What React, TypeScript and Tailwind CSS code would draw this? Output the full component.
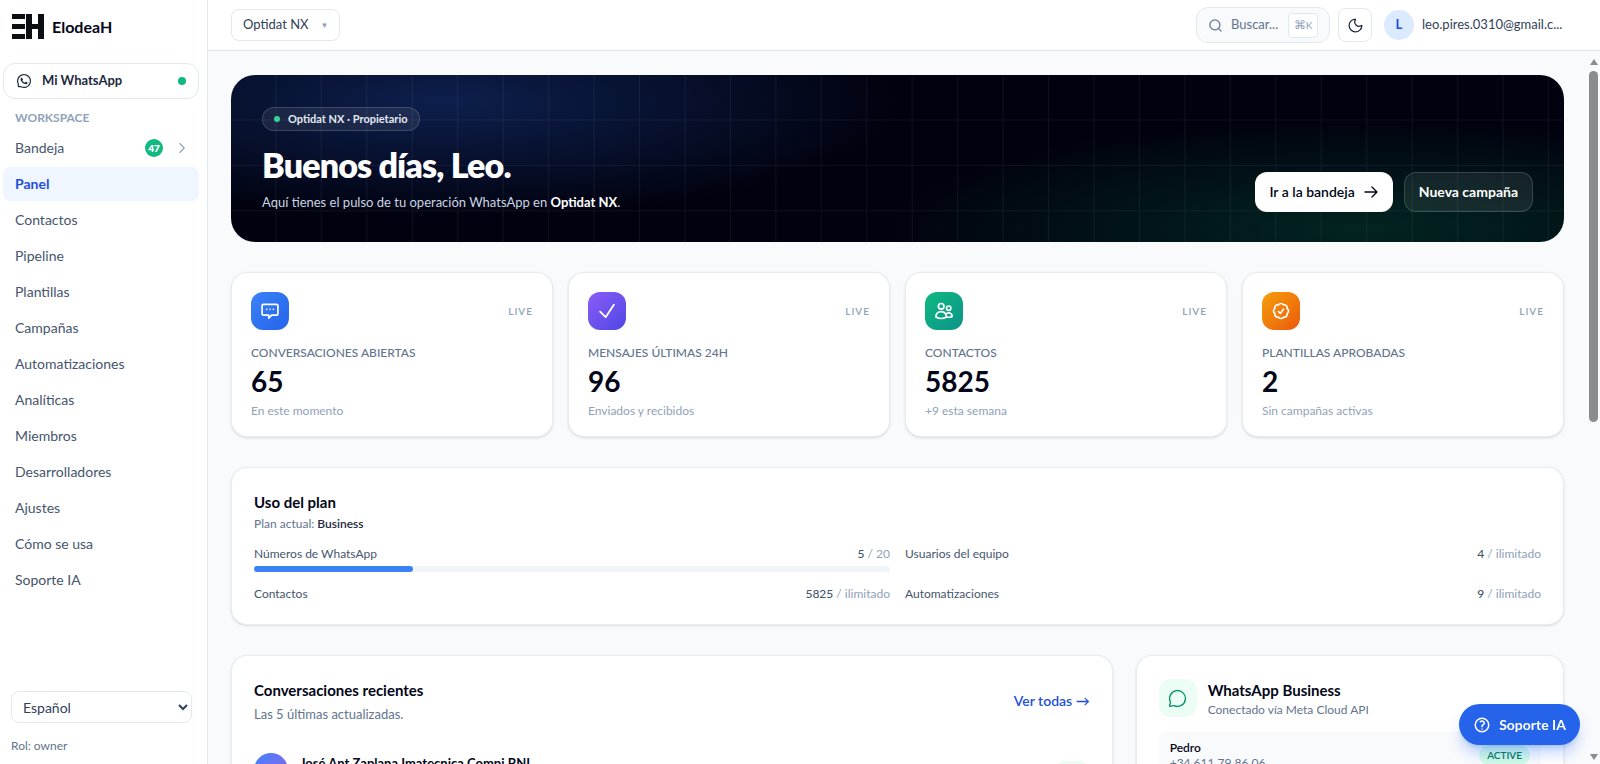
import { clsx } from "clsx";
import type { ReactNode } from "react";
import { AiOutlineWhatsApp } from "react-icons/ai";
import {
  HiOutlineArrowRight,
  HiOutlineCheck,
  HiOutlineCheckBadge,
  HiOutlineQuestionMarkCircle,
  HiOutlineUsers,
} from "react-icons/hi2";
import { ChevronRight, MessageCircle, Moon, Search } from "lucide-react";

const navItems = [
  "Panel",
  "Contactos",
  "Pipeline",
  "Plantillas",
  "Campañas",
  "Automatizaciones",
  "Analíticas",
  "Miembros",
  "Desarrolladores",
  "Ajustes",
  "Cómo se usa",
  "Soporte IA",
];

const ChatDotsIcon = () => (
  <svg viewBox="0 0 24 24" fill="none" stroke="currentColor" strokeWidth="2" strokeLinecap="round" strokeLinejoin="round" className="size-5">
    <path d="M8 10h.01M12 10h.01M16 10h.01M4 4h16a1.5 1.5 0 0 1 1.5 1.5v10a1.5 1.5 0 0 1-1.5 1.5h-6l-3.500 3.500V17H4a1.5 1.5 0 0 1-1.5-1.5v-10A1.5 1.5 0 0 1 4 4z" />
  </svg>
);

const stats = [
  {
    label: "Conversaciones abiertas",
    value: "65",
    hint: "En este momento",
    color: "from-[#3b82f6] to-[#2563eb]",
    icon: <ChatDotsIcon />,
  },
  {
    label: "Mensajes últimas 24h",
    value: "96",
    hint: "Enviados y recibidos",
    color: "from-[#8b5cf6] to-[#4f46e5]",
    icon: <HiOutlineCheck className="size-[22px]" strokeWidth={2} />,
  },
  {
    label: "Contactos",
    value: "5825",
    hint: "+9 esta semana",
    color: "from-[#10b981] to-[#0d9488]",
    icon: <HiOutlineUsers className="size-5" strokeWidth={2} />,
  },
  {
    label: "Plantillas aprobadas",
    value: "2",
    hint: "Sin campañas activas",
    color: "from-[#f59e0b] to-[#ea580c]",
    icon: <HiOutlineCheckBadge className="size-5" strokeWidth={2} />,
  },
];

const usage = [
  { label: "Números de WhatsApp", used: 5, limit: 20 },
  { label: "Usuarios del equipo", used: 4 },
  { label: "Contactos", used: 5825 },
  { label: "Automatizaciones", used: 9 },
];

const Logo = () => (
  <svg viewBox="0 0 32 25" className="h-[25px] w-8" fill="#0b0f14" aria-hidden="true">
    <path d="M0 0h13v5H0zM0 10h13v5H0zM0 20h13v5H0zM14 0h6v10h6V0h6v25h-6V15h-6v10h-6z" />
  </svg>
);

const Card = ({ className, children }: { className?: string; children: ReactNode }) => (
  <section className={clsx("rounded-2xl border border-slate-200/80 bg-white shadow-sm", className)}>{children}</section>
);

const Sidebar = () => {
  return (
    <aside className="flex w-52 shrink-0 flex-col border-r border-slate-200 bg-white">
      <a href="#" className="flex h-[53px] items-center gap-2 pl-3 text-base font-bold text-slate-950">
        <Logo />
        ElodeaH
      </a>
      <div className="flex flex-col pt-[10px] pr-2 pl-[3px]">
        <button className="flex h-9 items-center rounded-xl border border-slate-200 px-3 text-[13px] font-bold text-slate-800">
          <AiOutlineWhatsApp className="mr-[10px] size-4" />
          Mi WhatsApp
          <span className="ml-auto size-2 rounded-full bg-[#10b981]" />
        </button>
        <p className="pt-[11px] pl-3 text-xs leading-4 font-bold text-slate-400">WORKSPACE</p>
        <nav className="mt-[5px] flex flex-col gap-[2px] text-sm text-slate-600">
          <a href="#" className="flex h-[34px] items-center rounded-lg pr-2 pl-3">
            Bandeja
            <span className="mr-[10px] ml-auto flex size-[18px] items-center justify-center rounded-full bg-[#10b981] text-[10px] font-extrabold text-white">
              47
            </span>
            <ChevronRight className="size-[18px] text-slate-400" strokeWidth={1.5} />
          </a>
          {navItems.map((item) => (
            <a
              key={item}
              href="#"
              className={clsx(
                "flex h-[34px] items-center rounded-lg px-3",
                item === "Panel" && "bg-[#eff6ff] font-bold text-[#1d4ed8]",
              )}
            >
              {item}
            </a>
          ))}
        </nav>
      </div>
      <div className="mt-auto px-[11px] pb-[10px]">
        <select aria-label="Idioma" className="h-8 w-[181px] rounded-lg border border-slate-200 bg-white px-[7px] text-sm text-slate-700">
          <option>Español</option>
          <option>English</option>
        </select>
        <p className="mt-[15px] text-xs text-slate-500">Rol: owner</p>
      </div>
    </aside>
  );
};

const TopBar = () => {
  return (
    <header className="flex h-[51px] shrink-0 items-center border-b border-slate-200 bg-white pr-8 pl-[23px]">
      <button className="flex h-8 items-center gap-3 rounded-lg border border-slate-200 px-[11px] text-[13px] text-slate-700">
        Optidat NX
        <span className="text-[8px] text-slate-400">▼</span>
      </button>
      <button className="ml-auto flex h-9 w-[134px] items-center rounded-xl border border-slate-200 bg-slate-50 px-[11px] text-[13px] text-slate-500">
        <Search className="mr-2 size-[15px]" />
        Buscar...
        <kbd className="ml-auto flex h-[25px] w-[30px] items-center justify-center rounded border border-slate-200 bg-white font-[inherit] text-[10px] text-slate-400">
          <span className="text-xs">⌘</span>K
        </kbd>
      </button>
      <button aria-label="Modo oscuro" className="ml-2 flex size-[34px] items-center justify-center rounded-lg border border-slate-200 text-slate-800">
        <Moon className="size-[17px]" strokeWidth={1.75} />
      </button>
      <button className="ml-3 flex w-[184px] items-center gap-2 text-[13px] text-slate-700">
        <span className="flex size-[30px] items-center justify-center rounded-full bg-[#dbeafe] font-bold text-[#1d4ed8]">L</span>
        leo.pires.0310@gmail.c...
      </button>
    </header>
  );
};

const Hero = () => {
  return (
    <section className="relative flex h-[167px] shrink-0 items-end justify-between overflow-hidden rounded-3xl bg-[#01020f] bg-[radial-gradient(ellipse_34%_70%_at_16%_16%,#0d1f4d,transparent),radial-gradient(ellipse_36%_65%_at_85%_92%,#022421,transparent)] px-[31px] pb-[30px]">
      <svg className="absolute inset-0 size-full" aria-hidden="true">
        <pattern id="grid" width="45.45" height="45.45" patternUnits="userSpaceOnUse">
          <path d="M44.9 0V44.9H0" fill="none" stroke="#fff" strokeOpacity="0.055" />
        </pattern>
        <rect width="100%" height="100%" fill="url(#grid)" />
      </svg>
      <div className="relative text-[13px] text-slate-300">
        <p className="flex h-6 w-fit items-center gap-2 rounded-full border border-white/15 bg-white/8 px-[11px] text-[11px] font-bold text-slate-200">
          <span className="size-[6px] rounded-full bg-[#34d399]" />
          Optidat NX · Propietario
        </p>
        <h1 className="mt-[14px] text-[34px] leading-10 font-extrabold tracking-tight text-white">Buenos días, Leo.</h1>
        <p className="mt-[7px] leading-5">
          Aquí tienes el pulso de tu operación WhatsApp en <strong className="font-bold text-white">Optidat NX</strong>.
        </p>
      </div>
      <div className="relative flex gap-[11px] text-sm">
        <button className="flex h-10 items-center gap-2 rounded-xl bg-white px-[14px] font-semibold text-slate-950">
          Ir a la bandeja
          <HiOutlineArrowRight className="size-4" strokeWidth={2} />
        </button>
        <button className="h-10 rounded-xl border border-white/15 bg-white/8 px-[14px] font-bold text-white">Nueva campaña</button>
      </div>
    </section>
  );
};

const Stats = () => {
  return (
    <div className="grid shrink-0 grid-cols-4 gap-[15px]">
      {stats.map((stat) => (
        <Card key={stat.label} className="px-[19px] pt-[19px] pb-[17px]">
          <div className="flex items-center justify-between">
            <span className={clsx("flex size-[38px] items-center justify-center rounded-xl bg-linear-to-br text-white", stat.color)}>
              {stat.icon}
            </span>
            <span className="text-[10px] font-semibold tracking-widest text-slate-400">LIVE</span>
          </div>
          <p className="mt-[15px] text-xs font-medium text-slate-500 uppercase">{stat.label}</p>
          <p className="mt-[2px] text-[28px] leading-9 font-bold text-slate-950">{stat.value}</p>
          <p className="mt-1 text-xs text-slate-400">{stat.hint}</p>
        </Card>
      ))}
    </div>
  );
};

const PlanUsage = () => {
  return (
    <Card className="shrink-0 p-[22px]">
      <h2 className="text-[15px] leading-6 font-bold text-slate-950">Uso del plan</h2>
      <p className="mt-[2px] text-xs text-slate-500">
        Plan actual: <strong className="font-semibold text-slate-800">Business</strong>
      </p>
      <div className="mt-[14px] grid grid-cols-2 gap-x-[15px] gap-y-[14px]">
        {usage.map(({ label, used, limit }) => (
          <div key={label} className="text-xs text-slate-600">
            <div className="flex justify-between">
              <span>{label}</span>
              <span className="text-slate-400">
                <span className="font-medium text-slate-600">{used}</span> / {limit ?? "ilimitado"}
              </span>
            </div>
            {limit && (
              <div className="mt-1 h-[6px] rounded-full bg-slate-100">
                <div className="h-full rounded-full bg-[#3b82f6]" style={{ width: `${(used / limit) * 100}%` }} />
              </div>
            )}
          </div>
        ))}
      </div>
    </Card>
  );
};

const RecentChats = () => {
  return (
    <Card className="p-[22px]">
      <div className="flex items-center justify-between">
        <div>
          <h2 className="text-[15px] leading-6 font-bold text-slate-950">Conversaciones recientes</h2>
          <p className="mt-[2px] text-[13px] leading-5 text-slate-500">Las 5 últimas actualizadas.</p>
        </div>
        <a href="#" className="text-sm font-semibold text-[#1d4ed8]">
          Ver todas →
        </a>
      </div>
      <div className="mt-[29px] flex gap-3">
        <span className="size-[34px] rounded-full bg-linear-to-br from-[#3b82f6] to-[#8b5cf6]" />
        <p className="text-[13px] leading-5 font-bold text-slate-950">José Ant Zaplana Imatecnica Compi BNI</p>
        <span className="mt-2 ml-auto h-5 w-9 rounded-full bg-emerald-50" />
      </div>
    </Card>
  );
};

const WhatsAppStatus = () => {
  return (
    <Card className="p-[22px]">
      <div className="flex items-center gap-[11px]">
        <span className="flex size-[38px] items-center justify-center rounded-xl bg-[#ecfdf5] text-[#059669]">
          <MessageCircle className="size-[19px]" strokeWidth={1.75} />
        </span>
        <div>
          <h2 className="text-[15px] leading-6 font-bold text-slate-950">WhatsApp Business</h2>
          <p className="text-xs text-slate-500">Conectado vía Meta Cloud API</p>
        </div>
      </div>
      <div className="mt-[14px] flex items-center justify-between rounded-lg bg-slate-50 px-[11px] py-2 text-xs text-slate-500">
        <div className="leading-[15px]">
          <p className="font-semibold text-slate-950">Pedro</p>
          <p>+34 611 79 86 06</p>
        </div>
        <span className="rounded-full bg-[#d1fae5] px-2 text-[10px] leading-5 font-semibold text-[#047857]">ACTIVE</span>
      </div>
    </Card>
  );
};

const Scrollbar = () => (
  <div className="flex w-[13px] shrink-0 flex-col items-center bg-slate-50 pt-2 pb-1" aria-hidden="true">
    <svg viewBox="0 0 8 6" className="h-[6px] w-2" fill="#8b8b8b">
      <path d="M4 0l4 6H0z" />
    </svg>
    <div className="mt-[6px] h-1/2 w-[9px] rounded-full bg-[#8b8b8b]" />
    <svg viewBox="0 0 8 6" className="mt-auto h-[6px] w-2" fill="#8b8b8b">
      <path d="M4 6L0 0h8z" />
    </svg>
  </div>
);

export default function App() {
  return (
    <div className="flex h-screen overflow-hidden bg-slate-50 font-['Lato',sans-serif] text-slate-900">
      <Sidebar />
      <div className="flex min-w-0 flex-1 flex-col">
        <TopBar />
        <div className="flex min-h-0 flex-1">
          <main className="flex min-w-0 flex-1 flex-col gap-[30px] overflow-hidden px-[23px] pt-6">
            <Hero />
            <Stats />
            <PlanUsage />
            <div className="grid shrink-0 grid-cols-[881fr_428fr] gap-[23px]">
              <RecentChats />
              <WhatsAppStatus />
            </div>
          </main>
          <Scrollbar />
        </div>
      </div>
      <button className="fixed right-5 bottom-[19px] flex h-[41px] items-center gap-2 rounded-full bg-[#2563eb] px-[14px] text-sm font-bold text-white shadow-lg shadow-blue-600/30">
        <HiOutlineQuestionMarkCircle className="size-[18px]" strokeWidth={2} />
        Soporte IA
      </button>
    </div>
  );
}
